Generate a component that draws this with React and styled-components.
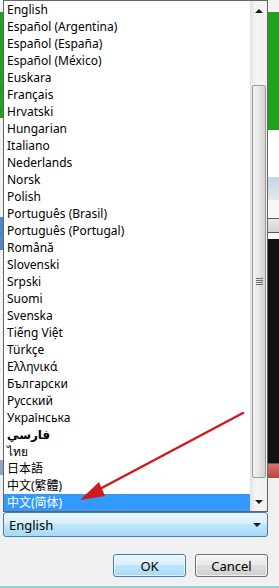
import React from "react";
import styled, { createGlobalStyle } from "styled-components";

const languages = [
  "English",
  "Español (Argentina)",
  "Español (España)",
  "Español (México)",
  "Euskara",
  "Français",
  "Hrvatski",
  "Hungarian",
  "Italiano",
  "Nederlands",
  "Norsk",
  "Polish",
  "Português (Brasil)",
  "Português (Portugal)",
  "Română",
  "Slovenski",
  "Srpski",
  "Suomi",
  "Svenska",
  "Tiếng Việt",
  "Türkçe",
  "Ελληνικά",
  "Български",
  "Русский",
  "Українська",
  "فارسي",
  "ไทย",
  "日本語",
  "中文(繁體)",
  "中文(简体)",
];

const leftBands = [
  { h: 12, c: "#f4f4f4" },
  { h: 106, c: "#1fa31f" },
  { h: 99, c: "#f2f2f2" },
  { h: 33, c: "#4f86c6" },
  { h: 210, c: "#f4f4f4" },
  { h: 15, c: "#8ea6bf" },
  { h: 3, c: "#f4f4f4" },
];

const rightBands = [
  { h: 12, c: "#f2f2f2" },
  { h: 118, c: "#1fa31f" },
  { h: 47, c: "#ffffff" },
  { h: 23, c: "linear-gradient(#c6d5e4, #dfe7ef)" },
  { h: 18, c: "#f6f6f6" },
  { h: 14, c: "linear-gradient(#e8e8e8, #d3d3d3)", line: true },
  { h: 7, c: "#f7f7f7", line: true },
  { h: 224, c: "#121212" },
  { h: 15, c: "linear-gradient(#d9716c, #b9443f)", line: true },
];

const GlobalStyle = createGlobalStyle`
  html, body {
    margin: 0;
    padding: 0;
    background: #f0f0f0;
  }
  body {
    font-family: "Noto Sans", "DejaVu Sans", "Noto Sans CJK SC", sans-serif;
    font-size: 12px;
  }
`;

const Screen = styled.div`
  position: relative;
  width: 279px;
  height: 588px;
  overflow: hidden;
  display: flex;
  flex-direction: column;
  background: #f0f0f0;
`;

const Backdrop = styled.div`
  height: 478px;
  display: flex;
  justify-content: space-between;
  flex-shrink: 0;
`;

const Strip = styled.div`
  width: ${(p) => p.$w}px;
  display: flex;
  flex-direction: column;
`;

const Band = styled.div`
  height: ${(p) => p.$h}px;
  background: ${(p) => p.$c};
  border-top: ${(p) => (p.$line ? "1px solid #5a5a5a" : "none")};
  box-sizing: border-box;
`;

const Dialog = styled.div`
  flex: 1;
  display: flex;
  flex-direction: column;
  padding: 34px 11px 0 3px;
  border-bottom: 2px solid #8fd3dc;
  box-sizing: border-box;
`;

const ComboWrap = styled.div`
  position: relative;
`;

const Combo = styled.div`
  height: 25px;
  box-sizing: border-box;
  border: 1px solid #3c7fb1;
  border-radius: 3px;
  background: linear-gradient(#eaf6fd 0%, #d9f0fc 45%, #bee6fd 50%, #a7d9f5 100%);
  display: flex;
  align-items: center;
  justify-content: space-between;
  padding: 0 6px 0 5px;
  font-size: 13px;
  color: #000;
`;

const Arrow = styled.span`
  width: 0;
  height: 0;
  border-left: 4px solid transparent;
  border-right: 4px solid transparent;
  border-${(p) => (p.$up ? "bottom" : "top")}: 4px solid #1a1a1a;
`;

const Dropdown = styled.div`
  position: absolute;
  left: 0;
  bottom: 100%;
  width: 265px;
  height: 512px;
  box-sizing: border-box;
  border: 1px solid #646464;
  background: #fff;
  display: flex;
`;

const List = styled.div`
  flex: 1;
  display: flex;
  flex-direction: column;
`;

const Item = styled.div`
  height: 17px;
  line-height: 17px;
  padding-left: 3px;
  white-space: nowrap;
  color: ${(p) => (p.$selected ? "#fff" : "#000")};
  background: ${(p) => (p.$selected ? "#3399ff" : "transparent")};
  font-weight: ${(p) => (p.$rtl ? 700 : 400)};
`;

const Scrollbar = styled.div`
  width: 16px;
  display: flex;
  flex-direction: column;
  background: linear-gradient(90deg, #e6e6e6, #f5f5f5 30%, #f1f1f1);
  border-left: 1px solid #e2e2e2;
`;

const ScrollButton = styled.div`
  height: ${(p) => p.$h}px;
  display: flex;
  justify-content: center;
  align-items: ${(p) => (p.$up ? "flex-start" : "flex-end")};
  padding: ${(p) => (p.$up ? "8px 0 0" : "0 0 7px")};
  box-sizing: border-box;
`;

const Track = styled.div`
  flex: 1;
  padding: 0 1px;
  display: flex;
`;

const Thumb = styled.div`
  flex: 1;
  border: 1px solid #989898;
  border-radius: 2px;
  background: linear-gradient(90deg, #f4f4f4, #e6e6e6 50%, #d2d2d2);
  display: flex;
  align-items: center;
  justify-content: center;
`;

const Grip = styled.div`
  width: 7px;
  height: 7px;
  background: repeating-linear-gradient(#6b6b6b 0 1px, transparent 1px 2px);
`;

const ButtonRow = styled.div`
  display: flex;
  justify-content: flex-end;
  gap: 9px;
  margin-top: 17px;
`;

const Button = styled.button`
  width: ${(p) => p.$w}px;
  height: 23px;
  border-radius: 3px;
  font-family: inherit;
  font-size: 13px;
  color: #000;
  padding: 0;
  border: 1px solid ${(p) => (p.$primary ? "#3c7fb1" : "#707070")};
  background: ${(p) =>
    p.$primary
      ? "linear-gradient(#eaf6fd 0%, #d9f0fc 45%, #bee6fd 50%, #a7d9f5 100%)"
      : "linear-gradient(#f2f2f2 0%, #ebebeb 45%, #dddddd 50%, #cfcfcf 100%)"};
  box-shadow: inset 0 0 0 1px rgba(255, 255, 255, 0.7);
`;

const Annotation = styled.svg`
  position: absolute;
  left: 0;
  top: 0;
  pointer-events: none;
`;

export default function App() {
  return (
    <>
      <GlobalStyle />
      <Screen>
        <Backdrop>
          <Strip $w={3}>
            {leftBands.map((b, i) => (
              <Band key={i} $h={b.h} $c={b.c} />
            ))}
          </Strip>
          <Strip $w={11}>
            {rightBands.map((b, i) => (
              <Band key={i} $h={b.h} $c={b.c} $line={b.line} />
            ))}
          </Strip>
        </Backdrop>

        <Dialog>
          <ComboWrap>
            <Dropdown>
              <List>
                {languages.map((lang, i) => (
                  <Item
                    key={lang}
                    $selected={i === languages.length - 1}
                    $rtl={lang === "فارسي"}
                  >
                    {lang}
                  </Item>
                ))}
              </List>
              <Scrollbar>
                <ScrollButton $h={84} $up>
                  <Arrow $up />
                </ScrollButton>
                <Track>
                  <Thumb>
                    <Grip />
                  </Thumb>
                </Track>
                <ScrollButton $h={33}>
                  <Arrow />
                </ScrollButton>
              </Scrollbar>
            </Dropdown>
            <Combo>
              English
              <Arrow />
            </Combo>
          </ComboWrap>
          <ButtonRow>
            <Button $w={73} $primary>OK</Button>
            <Button $w={73}>Cancel</Button>
          </ButtonRow>
        </Dialog>

        <Annotation width="279" height="588" viewBox="0 0 279 588">
          <line
            x1="243"
            y1="413"
            x2="96"
            y2="491"
            stroke="#d3181c"
            strokeWidth="2.5"
            strokeLinecap="round"
          />
          <polygon points="80,500 99,482 105,496" fill="#d3181c" />
        </Annotation>
      </Screen>
    </>
  );
}
